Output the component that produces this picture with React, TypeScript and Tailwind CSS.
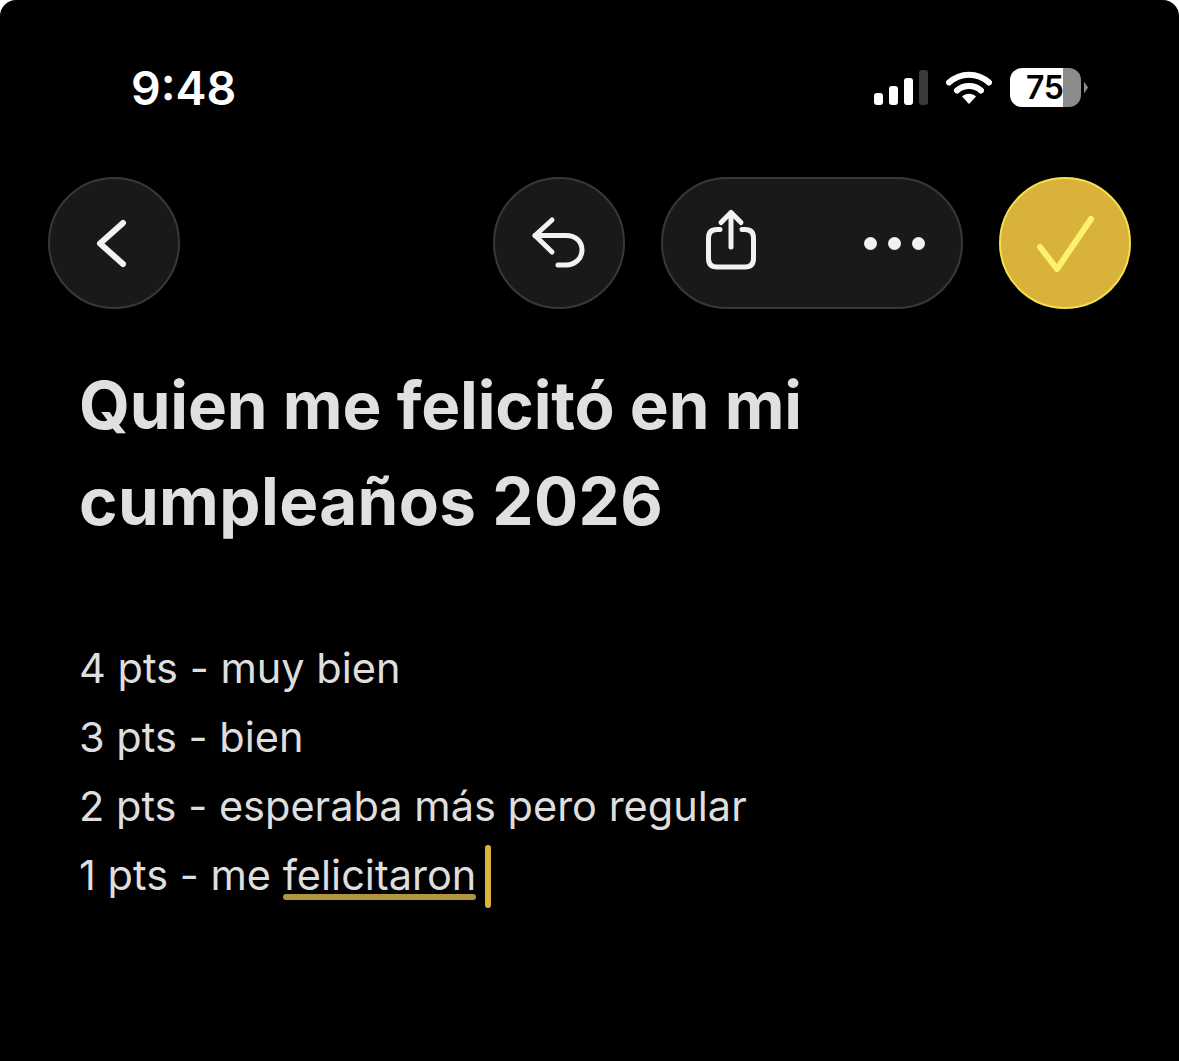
const sans = "font-['Inter','Liberation_Sans',sans-serif]";

function Signal() {
  return (
    <div className="flex items-end gap-[6px]">
      <span className="h-[12px] w-[9px] rounded-[3px] bg-white" />
      <span className="h-[19px] w-[9px] rounded-[3px] bg-white" />
      <span className="h-[27px] w-[9px] rounded-[3px] bg-white" />
      <span className="h-[35px] w-[9px] rounded-[3px] bg-[#3a3a3a]" />
    </div>
  );
}

function Wifi() {
  return (
    <svg width="46" height="35" viewBox="1 0 46 35" fill="none">
      <path d="M4 12.5C15.500 2 32.500 2 44 12.500" stroke="white" strokeWidth="6" strokeLinecap="round" />
      <path d="M12 20.500C18.500 14.500 29.500 14.500 36 20.500" stroke="white" strokeWidth="6" strokeLinecap="round" />
      <path d="M17 26.500C21 22.800 27 22.800 31 26.500L24 34Z" fill="white" />
    </svg>
  );
}

function Battery() {
  return (
    <div className="flex items-center gap-[3px]">
      <div className="flex h-[39px] w-[71px] items-center overflow-hidden rounded-[12px] bg-[linear-gradient(90deg,#fff_0,#fff_74.6%,#8b8b8b_74.6%,#8b8b8b_100%)]">
        <span className="ml-[16px] text-[32px] font-semibold leading-none tracking-[-0.3px] text-black">75</span>
      </div>
      <span className="h-[12px] w-[4px] bg-[#8b8b8b] [clip-path:polygon(0_0,100%_50%,0_100%)]" />
    </div>
  );
}

export default function App() {
  return (
    <div className={`h-[1061px] w-[1179px] overflow-hidden bg-white ${sans}`}>
      <div className="h-full overflow-hidden rounded-t-[16px] bg-black">
        <div className="flex h-[177px] items-start justify-between pl-[131px] pr-[91px] pt-[61px]">
          <span className="text-[46.5px] font-semibold leading-[54px] text-white">9:48</span>
          <div className="mt-[7px] flex items-center gap-[18px]">
            <Signal />
            <Wifi />
            <Battery />
          </div>
        </div>

        <div className="flex items-center px-[48px]">
          <button className="flex size-[132px] items-center justify-center rounded-full border-2 border-[#383838] bg-[#191919]">
            <svg width="36" height="52" viewBox="96 217 36 52" fill="none" stroke="#f2f2f2" strokeWidth="6" strokeLinecap="round" strokeLinejoin="round">
              <path d="M123 223L100 243.500L123 264" />
            </svg>
          </button>
          <button className="ml-auto flex size-[132px] items-center justify-center rounded-full border-2 border-[#383838] bg-[#191919]">
            <svg width="56" height="54" viewBox="531 216 56 54" fill="none" stroke="#f2f2f2" strokeWidth="5" strokeLinecap="round" strokeLinejoin="round">
              <path d="M552 220L535 235.500L552 252" />
              <path d="M535 235.500H566C576 235.500 582 241.500 582 250C582 258.500 575 265 566 265H558" />
            </svg>
          </button>
          <div className="ml-[36px] flex h-[132px] w-[302px] items-center justify-between rounded-full border-2 border-[#383838] bg-[#191919] pl-[43px] pr-[36px]">
            <svg width="50" height="70" viewBox="706 208 50 70" fill="none" stroke="#f2f2f2" strokeWidth="5" strokeLinecap="round" strokeLinejoin="round">
              <path d="M720 229.500H717C711.500 229.500 708.500 232.500 708.500 238V258.500C708.500 264 711.500 267 717 267H745C750.500 267 753.500 264 753.500 258.500V238C753.500 232.500 750.500 229.500 745 229.500H742" />
              <path d="M731 247V213" />
              <path d="M721 222.500L731 212.500L741 222.500" />
            </svg>
            <div className="flex gap-[11px]">
              <span className="size-[13px] rounded-full bg-[#f2f2f2]" />
              <span className="size-[13px] rounded-full bg-[#f2f2f2]" />
              <span className="size-[13px] rounded-full bg-[#f2f2f2]" />
            </div>
          </div>
          <button className="ml-[36px] flex size-[132px] items-center justify-center rounded-full border-2 border-[#f5df4d] bg-[#d9b23c]">
            <svg width="64" height="62" viewBox="1033 212 64 62" fill="none" stroke="#fdf26b" strokeWidth="6" strokeLinecap="round" strokeLinejoin="round">
              <path d="M1040 247L1057 269L1091 219" />
            </svg>
          </button>
        </div>

        <div className="pl-[79px] pt-[49px]">
          <h1 className="text-[65.5px] font-bold leading-[96px] tracking-[-0.15px] text-[#e0e0e0]">
            Quien me felicitó en mi
            <br />
            <span className="tracking-[0.4px]">cumpleaños 2026</span>
          </h1>
          <div className="mt-[84px] text-[41.5px] font-normal leading-[69px] text-[#dedede]">
            <p>4 pts - muy bien</p>
            <p>3 pts - bien</p>
            <p>2 pts - esperaba más pero regular</p>
            <p>
              1 pts - me{" "}
              <span className="relative">
                felicitaron
                <span className="absolute inset-x-0 bottom-0 h-[6px] rounded-full bg-[#b2953f]" />
                <span className="absolute right-[-15px] top-[-5px] h-[63px] w-[6px] rounded-full bg-[#dbb03d]" />
              </span>
            </p>
          </div>
        </div>
      </div>
    </div>
  );
}
